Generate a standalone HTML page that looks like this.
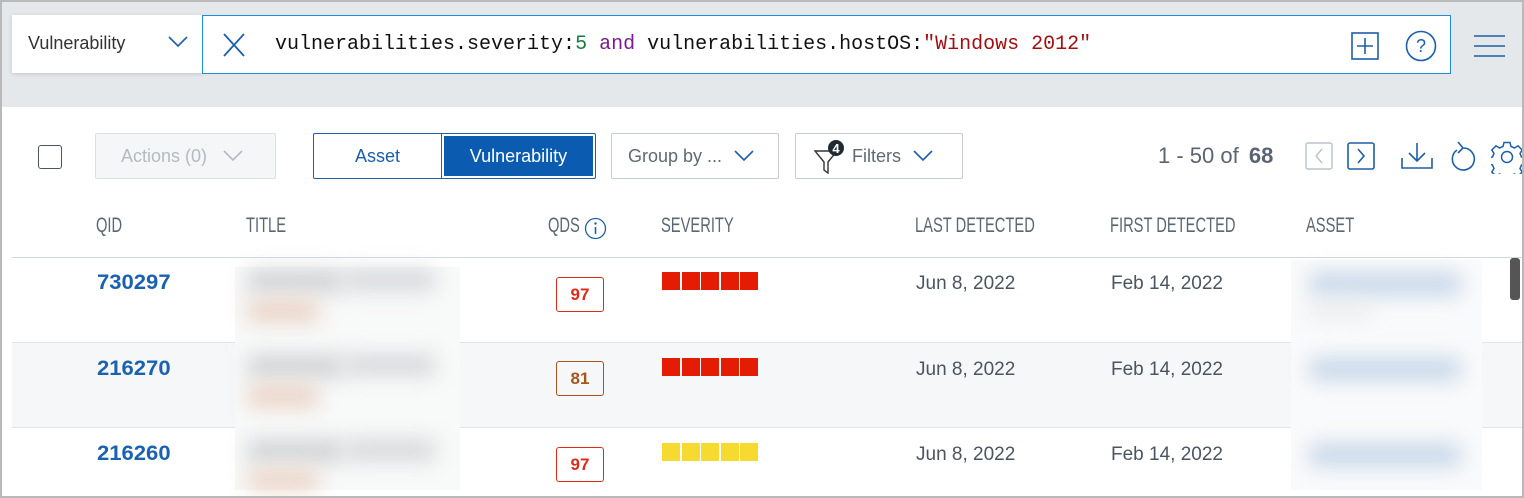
<!DOCTYPE html>
<html><head><style>
*{box-sizing:border-box;margin:0;padding:0}
body{width:1524px;height:498px;overflow:hidden;background:#fff;font-family:"Liberation Sans",sans-serif;position:relative}
.frame{position:absolute;inset:0;border:2px solid #b9b9b9;pointer-events:none;z-index:10}
.top{position:absolute;left:0;top:0;width:1524px;height:107px;background:#e4e8eb}
.abs{position:absolute}
.sel{left:12px;top:15px;width:191px;height:58px;background:#fff;box-shadow:0 1px 4px rgba(0,0,0,.15)}
.q{left:202px;top:15px;width:1249px;height:59px;background:#fff;border:1px solid #1d8fd6}
.mono{font-family:"Liberation Mono",monospace;font-size:20px;color:#111}
.hdr{font-family:"Liberation Sans",sans-serif;font-size:21px;color:#5a6772;top:214px;transform:scaleX(0.7);transform-origin:left top;white-space:nowrap}
.btn{border:1px solid #c8ccd0;border-radius:2px;height:46px;top:133px;font-size:18px;color:#5e6a74;display:flex;align-items:center}
.qid{font-size:21px;font-weight:bold;color:#1a62b0;left:97px;transform:scaleX(1.05);transform-origin:left}
.date{font-size:19px;color:#4b5560}
.badge{width:48px;height:35px;border:1px solid #dd2a1b;border-radius:3px;left:556px;font-size:17px;font-weight:bold;color:#dd2a1b;display:flex;align-items:center;justify-content:center}
.sev{left:662px;display:flex;gap:1.5px}
.sev i{display:block;width:18px;height:18px;background:#e31c03}
.blur{filter:blur(10px)}
</style></head><body>
<div class="top"></div>
<div class="abs sel"><span class="abs" style="left:16px;top:18px;font-size:18px;color:#333">Vulnerability</span>
<svg class="abs" style="left:156px;top:20px" width="20" height="14"><path d="M1 2l9 9 9-9" fill="none" stroke="#1d5fa8" stroke-width="1.6"/></svg></div>
<div class="abs q">
<svg class="abs" style="left:20px;top:17px" width="22" height="24"><path d="M1 1l20 22M21 1L1 23" stroke="#1d5fa8" stroke-width="1.8"/></svg>
<span class="abs mono" style="left:72px;top:17px">vulnerabilities.severity:<span style="color:#1b7b3c">5</span> <span style="color:#7a1c8f">and</span> vulnerabilities.hostOS:<span style="color:#a01010">"Windows 2012"</span></span>
<svg class="abs" style="left:1148px;top:16px" width="28" height="28"><rect x="1" y="1" width="26" height="26" fill="none" stroke="#1d5fa8" stroke-width="1.6"/><path d="M14 6v16M6 14h16" stroke="#1d5fa8" stroke-width="1.6"/></svg>
<svg class="abs" style="left:1202px;top:14px" width="32" height="32"><circle cx="16" cy="16" r="14.5" fill="none" stroke="#1d5fa8" stroke-width="1.6"/><text x="16" y="22" font-size="18" text-anchor="middle" fill="#1d5fa8" font-family="Liberation Sans">?</text></svg>
</div>
<svg class="abs" style="left:1474px;top:35px" width="32" height="22"><path d="M0 1h31M0 11h31M0 21h31" stroke="#1d5fa8" stroke-width="1.6"/></svg>

<div class="abs" style="left:38px;top:145px;width:24px;height:24px;border:1.5px solid #4a5560;border-radius:3px"></div>
<div class="abs btn" style="left:95px;width:181px;background:#f5f6f7;border-color:#dde0e3;color:#b3bac1;padding-left:25px">Actions (0)<svg style="margin-left:16px" width="20" height="12"><path d="M1 1l9 9 9-9" fill="none" stroke="#b3bac1" stroke-width="1.6"/></svg></div>
<div class="abs" style="left:313px;top:133px;width:283px;height:46px;border:1px solid #1a5fa8;border-radius:2px;display:flex">
<div style="width:128px;display:flex;align-items:center;justify-content:center;color:#1a5fa8;font-size:18px;border-right:1px solid #1a5fa8">Asset</div>
<div style="flex:1;margin:2px;background:#0b5cb0;color:#fff;display:flex;align-items:center;justify-content:center;font-size:18px">Vulnerability</div></div>
<div class="abs btn" style="left:611px;width:168px;padding-left:16px">Group by ...<svg style="margin-left:12px" width="20" height="12"><path d="M1 1l9 9 9-9" fill="none" stroke="#1d5fa8" stroke-width="1.6"/></svg></div>
<div class="abs btn" style="left:795px;width:168px;padding-left:18px">
<svg width="34" height="36" style="margin-right:4px"><path d="M1 13h22l-9 11v11l-4-3v-8z" fill="none" stroke="#333" stroke-width="1.4"/><circle cx="22" cy="10" r="8" fill="#1f2a33"/><text x="22" y="15" font-size="13" font-weight="bold" fill="#fff" text-anchor="middle" font-family="Liberation Sans">4</text></svg>Filters<svg style="margin-left:12px" width="20" height="12"><path d="M1 1l9 9 9-9" fill="none" stroke="#1d5fa8" stroke-width="1.6"/></svg></div>
<span class="abs" style="left:1158px;top:143px;font-size:22px;color:#5a6470">1 - 50 of <b style="margin-left:4px">68</b></span>
<svg class="abs" style="left:1305px;top:142px" width="29" height="29"><rect x="1" y="1" width="26" height="26" rx="2" fill="none" stroke="#b9c3cb" stroke-width="1.4"/><path d="M17 7l-6 7 6 7" fill="none" stroke="#b9c3cb" stroke-width="1.4"/></svg>
<svg class="abs" style="left:1347px;top:142px" width="29" height="29"><rect x="1" y="1" width="26" height="26" rx="2" fill="none" stroke="#1d5fa8" stroke-width="1.6"/><path d="M11 7l6 7-6 7" fill="none" stroke="#1d5fa8" stroke-width="1.6"/></svg>
<svg class="abs" style="left:1400px;top:142px" width="34" height="28"><path d="M17 1v18M9 11l8 8 8-8M2 16v10h30V16" fill="none" stroke="#1d5fa8" stroke-width="1.6"/></svg>
<svg class="abs" style="left:1447px;top:140px" width="30" height="34"><path d="M10 10A11 11 0 1 0 16 8M11 2l5 6-5 5" fill="none" stroke="#1d5fa8" stroke-width="1.6"/></svg>
<svg class="abs" style="left:1491px;top:141px" width="33" height="33"><g transform="translate(16 16)" fill="none" stroke="#1d5fa8" stroke-width="1.5"><circle r="5.5"/><path d="M-3 -14.5h6l1 4 3.5 1.5 3.5-2.2 4.2 4.2-2.2 3.5 1.5 3.5 4 1v6l-4 1-1.5 3.5 2.2 3.5-4.2 4.2-3.5-2.2-3.5 1.5-1 4h-6l-1-4-3.5-1.5-3.5 2.2-4.2-4.2 2.2-3.5-1.5-3.5-4-1v-6l4-1 1.5-3.5-2.2-3.5 4.2-4.2 3.5 2.2 3.5-1.5z"/></g></svg>

<span class="abs hdr" style="left:96px">QID</span>
<span class="abs hdr" style="left:246px">TITLE</span>
<span class="abs hdr" style="left:548px">QDS</span>
<svg class="abs" style="left:584px;top:217px" width="23" height="23"><circle cx="11.5" cy="11.5" r="10" fill="none" stroke="#1d5fa8" stroke-width="1.3"/><path d="M11.5 10v7" stroke="#1d5fa8" stroke-width="1.6"/><circle cx="11.5" cy="6.5" r="1.2" fill="#1d5fa8"/></svg>
<span class="abs hdr" style="left:661px">SEVERITY</span>
<span class="abs hdr" style="left:915px">LAST DETECTED</span>
<span class="abs hdr" style="left:1110px">FIRST DETECTED</span>
<span class="abs hdr" style="left:1306px">ASSET</span>

<div class="abs" style="left:12px;top:257px;width:1510px;height:1px;background:#d3d7db"></div>
<div class="abs" style="left:12px;top:342px;width:1510px;height:86px;background:#f5f7f9;border-top:1px solid #e1e5e8;border-bottom:1px solid #e1e5e8"></div>
<div class="abs" style="left:1510px;top:258px;width:10px;height:42px;background:#555;border-radius:3px"></div>

<span class="abs qid" style="top:271px">730297</span>
<span class="abs qid" style="top:357px">216270</span>
<span class="abs qid" style="top:442px">216260</span>

<div class="abs" style="left:235px;top:267px;width:225px;height:223px;background:#f8f9f9"></div>
<div class="abs blur" style="left:248px;top:270px;width:95px;height:22px;background:#cfd2d4"></div>
<div class="abs blur" style="left:345px;top:270px;width:90px;height:20px;background:#d4d7d9"></div>
<div class="abs blur" style="left:248px;top:300px;width:70px;height:22px;background:#ead3c5"></div>
<div class="abs blur" style="left:248px;top:355px;width:95px;height:22px;background:#cfd2d4"></div>
<div class="abs blur" style="left:345px;top:355px;width:90px;height:20px;background:#d4d7d9"></div>
<div class="abs blur" style="left:248px;top:385px;width:70px;height:22px;background:#ead3c5"></div>
<div class="abs blur" style="left:248px;top:440px;width:95px;height:22px;background:#cfd2d4"></div>
<div class="abs blur" style="left:345px;top:440px;width:90px;height:20px;background:#d4d7d9"></div>
<div class="abs blur" style="left:248px;top:470px;width:70px;height:20px;background:#ead3c5"></div>

<div class="abs badge" style="top:277px">97</div>
<div class="abs badge" style="top:361px;border-color:#a8541e;color:#a8541e">81</div>
<div class="abs badge" style="top:447px">97</div>

<div class="abs sev" style="top:272px"><i></i><i></i><i></i><i></i><i></i></div>
<div class="abs sev" style="top:358px"><i></i><i></i><i></i><i></i><i></i></div>
<div class="abs sev" style="top:443px"><i style="background:#f7da2f"></i><i style="background:#f7da2f"></i><i style="background:#f7da2f"></i><i style="background:#f7da2f"></i><i style="background:#f7da2f"></i></div>

<span class="abs date" style="left:916px;top:273px">Jun 8, 2022</span>
<span class="abs date" style="left:916px;top:359px">Jun 8, 2022</span>
<span class="abs date" style="left:916px;top:444px">Jun 8, 2022</span>
<span class="abs date" style="left:1111px;top:273px">Feb 14, 2022</span>
<span class="abs date" style="left:1111px;top:359px">Feb 14, 2022</span>
<span class="abs date" style="left:1111px;top:444px">Feb 14, 2022</span>

<div class="abs" style="left:1291px;top:260px;width:191px;height:230px;background:#f9fafb"></div>
<div class="abs blur" style="left:1310px;top:273px;width:150px;height:22px;background:#c6d6e8"></div>
<div class="abs blur" style="left:1310px;top:303px;width:60px;height:14px;background:#e8eaec"></div>
<div class="abs blur" style="left:1310px;top:358px;width:150px;height:22px;background:#c6d6e8"></div>
<div class="abs blur" style="left:1310px;top:444px;width:150px;height:22px;background:#c6d6e8"></div>
<div class="frame"></div>
</body></html>
